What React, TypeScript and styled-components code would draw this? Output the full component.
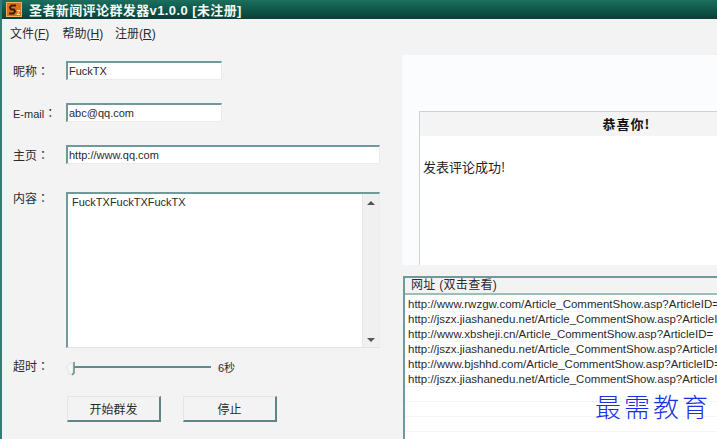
import React from "react";
import styled, { createGlobalStyle } from "styled-components";

const cjk = `"Noto Sans CJK SC", sans-serif`;
const uiFont = `"Liberation Sans", "Noto Sans CJK SC", sans-serif`;
const labelFont = `"Liberation Sans", "Noto Sans CJK TC", sans-serif`;

const GlobalStyle = createGlobalStyle`
  html, body {
    margin: 0;
    padding: 0;
    width: 717px;
    height: 439px;
    overflow: hidden;
    background: #f3f3f3;
  }
`;

/* Window frame */
const Window = styled.div`
  width: 717px;
  height: 439px;
  display: flex;
  flex-direction: column;
  overflow: hidden;
  background: #f3f3f3;
  border-left: 2px solid #2f7f72;
  box-sizing: border-box;
  font-family: ${uiFont};
  font-size: 12px;
  color: #2a2a2a;
`;

const TitleBar = styled.div`
  height: 19px;
  margin-left: -2px;
  padding-left: 6px;
  display: flex;
  align-items: center;
  gap: 7px;
  background: linear-gradient(#1d6f5e, #0f5a4c 45%, #0b3f37);
  color: #f4f8f6;
  font-size: 13px;
  letter-spacing: 0.4px;
  font-weight: 700;
  white-space: nowrap;
`;

const MenuBar = styled.div`
  height: 26px;
  padding-left: 8px;
  display: flex;
  align-items: center;
  gap: 5.5px;
`;

const MenuItem = styled.span`
  font-size: 12px;
  width: 47px;
  white-space: nowrap;
  u {
    text-decoration: underline;
  }
`;

const Body = styled.div`
  flex: 1;
  display: grid;
  grid-template-columns: 400px 315px;
  min-height: 0;
`;

/* Left form */
const Form = styled.div`
  display: flex;
  flex-direction: column;
  padding: 16px 0 0 11px;
`;

const Row = styled.div<{ $gap: number }>`
  display: flex;
  align-items: center;
  margin-bottom: ${(p) => p.$gap}px;
`;

const TopRow = styled.div`
  display: flex;
  align-items: flex-start;
`;

const Label = styled.label<{ $lift?: number }>`
  width: 53px;
  flex: none;
  margin-top: ${(p) => p.$lift ?? 4}px;
  font-family: ${labelFont};
  font-size: 12px;
  line-height: 15px;
  white-space: nowrap;
`;

const LatinLabel = styled.span`
  font-size: 11px;
`;

const Field = styled.div<{ $width: number }>`
  width: ${(p) => p.$width}px;
  height: 19px;
  box-sizing: border-box;
  padding: 1px 0 0 1px;
  background: #fff;
  border-top: 2px solid #6f9a99;
  border-left: 2px solid #6f9a99;
  border-right: 1px solid #e9eceb;
  border-bottom: 1px solid #e9eceb;
  font-size: 11px;
  line-height: 14px;
  white-space: nowrap;
`;

const TextArea = styled.div`
  width: 314px;
  height: 156px;
  box-sizing: border-box;
  display: flex;
  background: #fff;
  border-top: 2px solid #6f9a99;
  border-left: 2px solid #6f9a99;
  border-right: 1px solid #e9eceb;
  border-bottom: 1px solid #dfe3e2;
`;

const TextContent = styled.div`
  flex: 1;
  padding: 1px 4px;
  font-size: 11px;
  line-height: 14px;
`;

const ScrollTrack = styled.div`
  width: 17px;
  flex: none;
  display: flex;
  flex-direction: column;
  justify-content: space-between;
  align-items: center;
  padding: 7px 0 5px;
  box-sizing: border-box;
  background: #f0f0f0;
  border-left: 1px solid #e6e6e6;
`;

const Arrow = styled.span<{ $down?: boolean }>`
  width: 0;
  height: 0;
  border-left: 4px solid transparent;
  border-right: 4px solid transparent;
  ${(p) =>
    p.$down ? "border-top: 4px solid #555;" : "border-bottom: 4px solid #555;"}
`;

const SliderRow = styled.div`
  display: flex;
  align-items: center;
  height: 20px;
  margin-top: 9px;
`;

const SliderBox = styled.div`
  position: relative;
  width: 145px;
  height: 20px;
  margin-right: 7px;
  padding-left: 8px;
  box-sizing: border-box;
  display: flex;
  align-items: center;
`;

const SliderLine = styled.div`
  width: 100%;
  height: 2px;
  background: #5f8d8b;
`;

const SliderThumb = styled.svg`
  position: absolute;
  left: 0;
  top: 3px;
`;

const Seconds = styled.span`
  font-size: 11px;
`;

const ButtonRow = styled.div`
  display: flex;
  gap: 22px;
  margin: 19px 0 0 54px;
`;

const Button = styled.button`
  width: 94px;
  height: 26px;
  padding: 0;
  box-sizing: border-box;
  background: #f3f3f3;
  border-top: 1px solid #e2e6e5;
  border-left: 1px solid #e2e6e5;
  border-right: 2px solid #5f8684;
  border-bottom: 2px solid #5f8684;
  font-family: ${cjk};
  font-size: 12px;
  color: #2a2a2a;
`;

/* Right side */
const RightColumn = styled.div`
  display: flex;
  flex-direction: column;
  padding: 10px 0 0 0;
  min-width: 0;
`;

const ResultPanel = styled.div`
  height: 210px;
  padding: 56px 0 0 17px;
  box-sizing: border-box;
  overflow: hidden;
  background: #fbfcfe;
`;

const ResultPage = styled.div`
  width: 414px;
  height: 154px;
  box-sizing: border-box;
  background: #fff;
  border-top: 1px solid #cfd2d4;
  border-left: 1px solid #cfd2d4;
`;

const ResultHeading = styled.div`
  height: 24px;
  line-height: 23px;
  text-align: center;
  background: #f4f4f4;
  font-family: ${cjk};
  font-size: 13px;
  letter-spacing: 1px;
  font-weight: 700;
  color: #111;
`;

const ResultText = styled.div`
  padding: 23px 0 0 3px;
  font-family: ${cjk};
  font-size: 13px;
  line-height: 16px;
  color: #222;
`;

const UrlList = styled.div`
  flex: 1;
  margin-top: 11px;
  margin-left: 1px;
  position: relative;
  overflow: hidden;
  background: #fff;
  border-top: 2px solid #6f9a99;
  border-left: 2px solid #6f9a99;
  min-height: 0;
`;

const UrlHeader = styled.div`
  height: 15px;
  padding-left: 6px;
  line-height: 15px;
  background: #f3f3f3;
  border-bottom: 2px solid #9dbdbd;
  font-size: 12px;
  letter-spacing: 0.3px;
  white-space: nowrap;
`;

const UrlRows = styled.div`
  padding-top: 2px;
`;

const UrlRow = styled.div`
  height: 15px;
  line-height: 14px;
  box-sizing: border-box;
  padding-left: 3px;
  border-bottom: 1px solid #f3f5f7;
  font-size: 11.5px;
  white-space: nowrap;
  overflow: hidden;
`;

const Watermark = styled.div`
  position: absolute;
  left: 190px;
  top: 110px;
  font-family: ${cjk};
  font-size: 26px;
  font-weight: 300;
  line-height: 36px;
  letter-spacing: 3px;
  color: #1a2fe0;
  white-space: nowrap;
`;

const urls = [
  "http://www.rwzgw.com/Article_CommentShow.asp?ArticleID=",
  "http://jszx.jiashanedu.net/Article_CommentShow.asp?ArticleID=",
  "http://www.xbsheji.cn/Article_CommentShow.asp?ArticleID=",
  "http://jszx.jiashanedu.net/Article_CommentShow.asp?ArticleID=",
  "http://www.bjshhd.com/Article_CommentShow.asp?ArticleID=",
  "http://jszx.jiashanedu.net/Article_CommentShow.asp?ArticleID=",
  "",
  "",
  "",
];

const AppIcon = () => (
  <svg width="16" height="15" viewBox="0 0 16 15">
    <rect x="0.5" y="0.5" width="15" height="14" fill="#d9711c" stroke="#f0b060" />
    <path d="M10 3.5H5.5L4 5.5 5 7.5h3l1 2-1.5 2H3" fill="none" stroke="#3a1a08" strokeWidth="2" />
    <path d="M11 8.5h3l-3 4h3" fill="none" stroke="#f6d9a8" strokeWidth="1" />
  </svg>
);

const App: React.FC = () => (
  <>
    <GlobalStyle />
    <Window>
      <TitleBar>
        <AppIcon />
        <span>圣者新闻评论群发器v1.0.0 [未注册]</span>
      </TitleBar>
      <MenuBar>
        <MenuItem>文件(<u>F</u>)</MenuItem>
        <MenuItem>帮助(<u>H</u>)</MenuItem>
        <MenuItem>注册(<u>R</u>)</MenuItem>
      </MenuBar>
      <Body>
        <Form>
          <Row $gap={23}>
            <Label>昵称：</Label>
            <Field $width={156}>FuckTX</Field>
          </Row>
          <Row $gap={23}>
            <Label><LatinLabel>E-mail</LatinLabel>：</Label>
            <Field $width={156}>abc@qq.com</Field>
          </Row>
          <Row $gap={28}>
            <Label>主页：</Label>
            <Field $width={314}>http://www.qq.com</Field>
          </Row>
          <TopRow>
            <Label $lift={0}>内容：</Label>
            <TextArea>
              <TextContent>FuckTXFuckTXFuckTX</TextContent>
              <ScrollTrack>
                <Arrow />
                <Arrow $down />
              </ScrollTrack>
            </TextArea>
          </TopRow>
          <SliderRow>
            <Label $lift={0}>超时：</Label>
            <SliderBox>
              <SliderLine />
              <SliderThumb width="10" height="16" viewBox="0 0 10 16">
                <path d="M1 6l3-3h3v10l-3 2-3-7z" fill="#f6f6f6" stroke="#e2e2e2" />
                <path d="M8 2v11l-2 2" fill="none" stroke="#5f8d8b" strokeWidth="1.5" />
              </SliderThumb>
            </SliderBox>
            <Seconds>6秒</Seconds>
          </SliderRow>
          <ButtonRow>
            <Button>开始群发</Button>
            <Button>停止</Button>
          </ButtonRow>
        </Form>
        <RightColumn>
          <ResultPanel>
            <ResultPage>
              <ResultHeading>恭喜你!</ResultHeading>
              <ResultText>发表评论成功!</ResultText>
            </ResultPage>
          </ResultPanel>
          <UrlList>
            <UrlHeader>网址 (双击查看)</UrlHeader>
            <UrlRows>
              {urls.map((url, i) => (
                <UrlRow key={i}>{url}</UrlRow>
              ))}
            </UrlRows>
            <Watermark>最需教育</Watermark>
          </UrlList>
        </RightColumn>
      </Body>
    </Window>
  </>
);

export default App;
